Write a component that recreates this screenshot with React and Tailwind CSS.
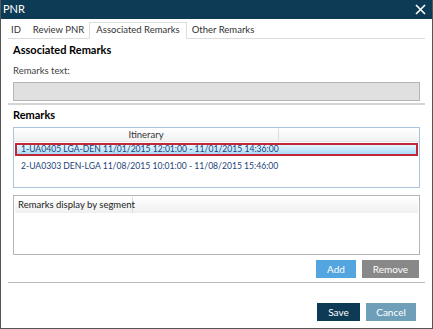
import React from 'react';

const rows = [
  '1-UA0405 LGA-DEN 11/01/2015 12:01:00 - 11/01/2015 14:36:00',
  '2-UA0303 DEN-LGA 11/08/2015 10:01:00 - 11/08/2015 15:46:00',
];

const tabs = [
  { label: 'ID', w: 'w-[20px] justify-start pl-[3px]' },
  { label: 'Review PNR', w: 'w-[61px] justify-center' },
  { label: 'Associated Remarks', w: 'w-[98px] justify-center', active: true },
  { label: 'Other Remarks', w: 'w-[72px] justify-center' },
];

export default function App() {
  return (
    <div
      className="w-[433px] h-[329px] bg-white border border-t-0 border-[#555] flex flex-col text-[10px] text-[#333] overflow-hidden"
      style={{ fontFamily: 'Lato, "Open Sans", sans-serif' }}
    >
      {/* title bar */}
      <div className="h-[19px] shrink-0 bg-[#0d3a55] flex items-center justify-between pl-[3px] pr-[7px] text-white -mx-px">
        <span className="text-[11px]">PNR</span>
        <svg width="11" height="11" viewBox="0 0 11 11">
          <path d="M1 1L10 10M10 1L1 10" stroke="#fff" strokeWidth="1.6" />
        </svg>
      </div>

      {/* tabs */}
      <div className="mt-[4px] mx-[7px] flex items-end h-[16px] shrink-0 border-b border-[#dcdcdc] text-[9.5px]">
        {tabs.map((t) => (
          <div
            key={t.label}
            className={
              t.active
                ? `${t.w} h-[17px] border border-b-white border-[#dcdcdc] -mb-px bg-white flex items-center`
                : `${t.w} h-[16px] flex items-center`
            }
          >
            {t.label}
          </div>
        ))}
      </div>

      <div className="px-[12px]">
        <div className="h-[22px] leading-[22px] text-[11px] font-bold text-black">Associated Remarks</div>
        <div className="h-[20px] leading-[20px] text-[9.5px] text-[#444]">Remarks text:</div>
        <div className="mt-[1px] h-[19px] bg-[#e0e0e0] border border-[#b5b5b5]" />
      </div>

      <div className="mx-[7px] mt-[2px] border-t-2 border-[#d4d4d4]" />

      <div className="px-[12px]">
        <div className="h-[19px] leading-[19px] text-[11px] font-bold text-black">Remarks</div>

        {/* itinerary table */}
        <div className="mt-[3px] h-[61px] border border-[#a9c4dc] bg-white">
          <div className="flex h-[14px] bg-gradient-to-b from-white to-[#f2f2f2] border-b border-[#e6e6e6]">
            <div className="w-[265px] border-r border-[#dedede] text-center leading-[13px] text-[9.5px] text-[#333]">
              Itinerary
            </div>
          </div>
          <div className="mx-px mt-px h-[13px] border-2 border-[#c0283a] bg-gradient-to-b from-[#e6f6fe] to-[#a9dcf7] flex items-center pl-[4px] text-[8.6px] text-[#1b3f7a] whitespace-nowrap">
            {rows[0]}
          </div>
          <div className="h-[21px] flex items-center pl-[7px] text-[8.6px] text-[#1b3f7a] whitespace-nowrap">{rows[1]}</div>
        </div>

        {/* remarks display table */}
        <div className="mt-[7px] h-[60px] border border-[#b5b5b5] p-px">
          <div className="flex h-[16px] bg-gradient-to-b from-white to-[#f0f0f0]">
            <div className="w-[118px] border-r border-[#dcdcdc] pl-[3px] leading-[16px] text-[9.5px] text-[#222] whitespace-nowrap">
              Remarks display by segment
            </div>
          </div>
        </div>

        <div className="mt-[5px] flex justify-end gap-[6px] pr-px">
          <button className="w-[40px] h-[18px] bg-[#52a5de] text-white text-[10px]">Add</button>
          <button className="w-[57px] h-[18px] bg-[#888888] text-white text-[10px]">Remove</button>
        </div>
      </div>

      <div className="mx-[7px] mt-[4px] border-t border-[#b9b9b9]" />

      <div className="mt-[20px] flex justify-end gap-[6px] pr-[16px]">
        <button className="w-[43px] h-[18px] bg-[#0d3a55] text-white text-[10px]">Save</button>
        <button className="w-[50px] h-[18px] bg-[#6f9fb8] text-white text-[10px]">Cancel</button>
      </div>
    </div>
  );
}
